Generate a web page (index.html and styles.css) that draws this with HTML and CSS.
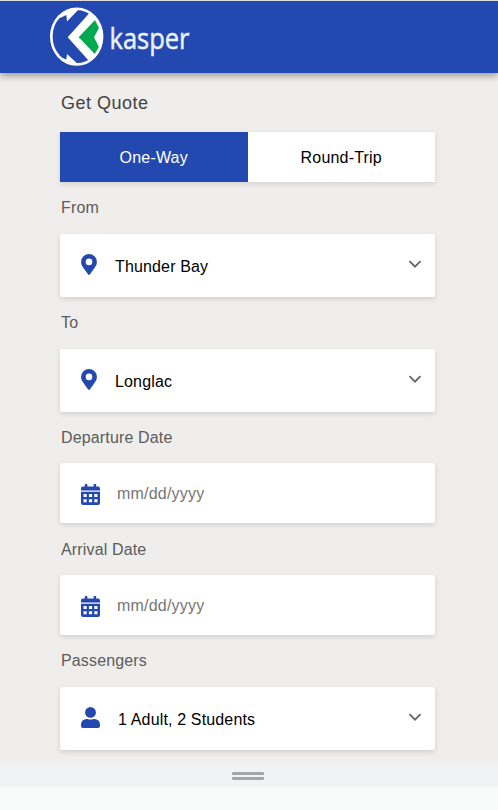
FILE: index.html
```html
<!DOCTYPE html>
<html lang="en">
<head>
<meta charset="utf-8">
<title>Kasper – Get Quote</title>
<link rel="stylesheet" href="styles.css">
</head>
<body>
<svg class="defs" aria-hidden="true">
  <symbol id="pin" viewBox="0 0 384 512"><path d="M172 502C27 291 0 270 0 192a192 192 0 0 1 384 0c0 78-27 99-172 310-10 13-30 13-40 0zM192 272a80 80 0 1 0 0-160 80 80 0 0 0 0 160z"/></symbol>
  <symbol id="calendar" viewBox="0 0 19 21"><path fill-rule="evenodd" d="M3.800 1a1 1 0 0 1 2.600 0v1.400h6.200V1a1 1 0 0 1 2.600 0v1.400H17a2 2 0 0 1 2 2V6.500H0V4.400a2 2 0 0 1 2-2h1.800zM0 7.700h19V19a2 2 0 0 1-2 2H2a2 2 0 0 1-2-2zM2.500 10v3h3.200v-3zM7.900 10v3h3.200v-3zM13.300 10v3h3.200v-3zM2.500 15.300v3h3.200v-3zM7.900 15.300v3h3.200v-3zM13.300 15.300v3h3.200v-3z"/></symbol>
  <symbol id="chevron" viewBox="0 0 14 9"><path d="M1.500 1.200 7 6.700l5.500-5.500" fill="none" stroke="#666" stroke-width="1.900"/></symbol>
</svg>
<header class="header">
  <svg class="logo" width="160" height="64" viewBox="48 5 160 64">
    <defs><clipPath id="disc"><ellipse cx="76.700" cy="36.600" rx="25.400" ry="27.800"/></clipPath></defs>
    <g clip-path="url(#disc)" fill="#fff">
      <path d="M67.700 37.300 89 13.500 85 8H106V66H85L89 61z"/>
      <path d="M60 8H80L67 21.500 66.300 15 60 18zM60 66H80L67 54 66.300 59.500 60 57z"/>
      <path fill="#00a94f" d="M95 20 78.700 37.300 94.800 54 99 47 94 37.300 99 28z"/>
    </g>
    <ellipse cx="76.700" cy="36.600" rx="25.400" ry="27.800" fill="none" stroke="#fff" stroke-width="2.600"/>
    <text class="brand" x="109.500" y="48.500" textLength="80" lengthAdjust="spacingAndGlyphs">kasper</text>
  </svg>
</header>
<main class="form">
  <h1 class="title">Get Quote</h1>
  <div class="trip"><button class="tab active">One-Way</button><button class="tab">Round-Trip</button></div>
  <div class="label">From</div>
  <div class="field select"><svg class="icon pin"><use href="#pin"/></svg><span class="value">Thunder Bay</span><svg class="chevron"><use href="#chevron"/></svg></div>
  <div class="label">To</div>
  <div class="field select"><svg class="icon pin"><use href="#pin"/></svg><span class="value">Longlac</span><svg class="chevron"><use href="#chevron"/></svg></div>
  <div class="label">Departure Date</div>
  <div class="field date"><svg class="icon calendar"><use href="#calendar"/></svg><span class="value hint">mm/dd/yyyy</span></div>
  <div class="label arrival">Arrival Date</div>
  <div class="field date"><svg class="icon calendar"><use href="#calendar"/></svg><span class="value hint">mm/dd/yyyy</span></div>
  <div class="label">Passengers</div>
  <div class="field select people"><svg class="icon person" viewBox="0 0 19 22"><circle cx="9.500" cy="5.400" r="5.400"/><path d="M0 19v-1.500a5.500 5.500 0 0 1 5.500-5.500c1.500 0 2 .6 4 .6s2.500-.6 4-.6a5.500 5.500 0 0 1 5.500 5.500V19a2 2 0 0 1-2 2H2a2 2 0 0 1-2-2z"/></svg><span class="value">1 Adult, 2 Students</span><svg class="chevron"><use href="#chevron"/></svg></div>
</main>
<div class="handle"><i></i><i></i></div>
<div class="sheet"></div>
</body>
</html>
```
FILE: styles.css
```css
* { box-sizing: border-box; }
body {
  margin: 0;
  height: 810px;
  overflow: hidden;
  display: flex;
  flex-direction: column;
  background: #efeeec;
  border-top: 1px solid #dcdcdc;
  font: 16px/20px "Liberation Sans", Arial, sans-serif;
}
.defs { display: none; }
.header {
  height: 72px;
  flex: none;
  padding: 4px 0 0 48px;
  background: #2349b1;
  box-shadow: 0 3px 7px rgba(0, 0, 0, .35);
}
.logo { display: block; }
.brand { font: 30px/1 "Open Sans", "Noto Sans", sans-serif; fill: #edf1fb; stroke: #edf1fb; stroke-width: .5px; }
.form { height: 690px; flex: none; padding: 20px 63px 0 60px; }
.title { margin: 0 0 19px 1px; font-size: 18px; line-height: 20px; font-weight: 400; letter-spacing: .5px; color: #444; }
.trip { display: flex; height: 50px; background: #fff; box-shadow: 0 2px 5px rgba(0, 0, 0, .12); }
.tab { flex: 1; border: 0; padding: 2px 0 0; background: #fff; color: #000; font: inherit; letter-spacing: .2px; }
.tab.active { background: #2349b1; color: #fff; }
.label { height: 52px; padding: 16px 0 0 1px; color: #5c5c5c; letter-spacing: .15px; }
.label.arrival { padding-top: 17px; }
.field {
  display: flex;
  background: #fff;
  border-radius: 2px;
  box-shadow: 0 2px 5px rgba(0, 0, 0, .13);
}
.select { height: 63px; padding: 20px 13px 0 21px; }
.date { height: 60px; margin-top: -.6px; padding: 21px 13px 0 21px; }
.people { margin-top: -.3px; }
.icon { flex: none; fill: #2349b1; }
.pin { width: 16px; height: 21px; margin-right: 18px; }
.calendar { width: 19px; height: 21px; margin-right: 17px; }
.person { width: 19px; height: 22px; margin-right: 18px; }
.value { flex: 1; padding-top: 3px; color: #000; letter-spacing: .15px; }
.hint { padding-top: 0; color: #757575; letter-spacing: .2px; }
.chevron { width: 14px; height: 9px; margin-top: 6px; }
.handle {
  height: 24px;
  flex: none;
  display: flex;
  flex-direction: column;
  align-items: center;
  gap: 2px;
  padding: 9px 2px 0 0;
  background: #f0f2f4;
}
.handle i { width: 32px; height: 3px; border-radius: 1px; background: #a5a7a7; }
.sheet { flex: 1; background: #f8faf9; }
```
